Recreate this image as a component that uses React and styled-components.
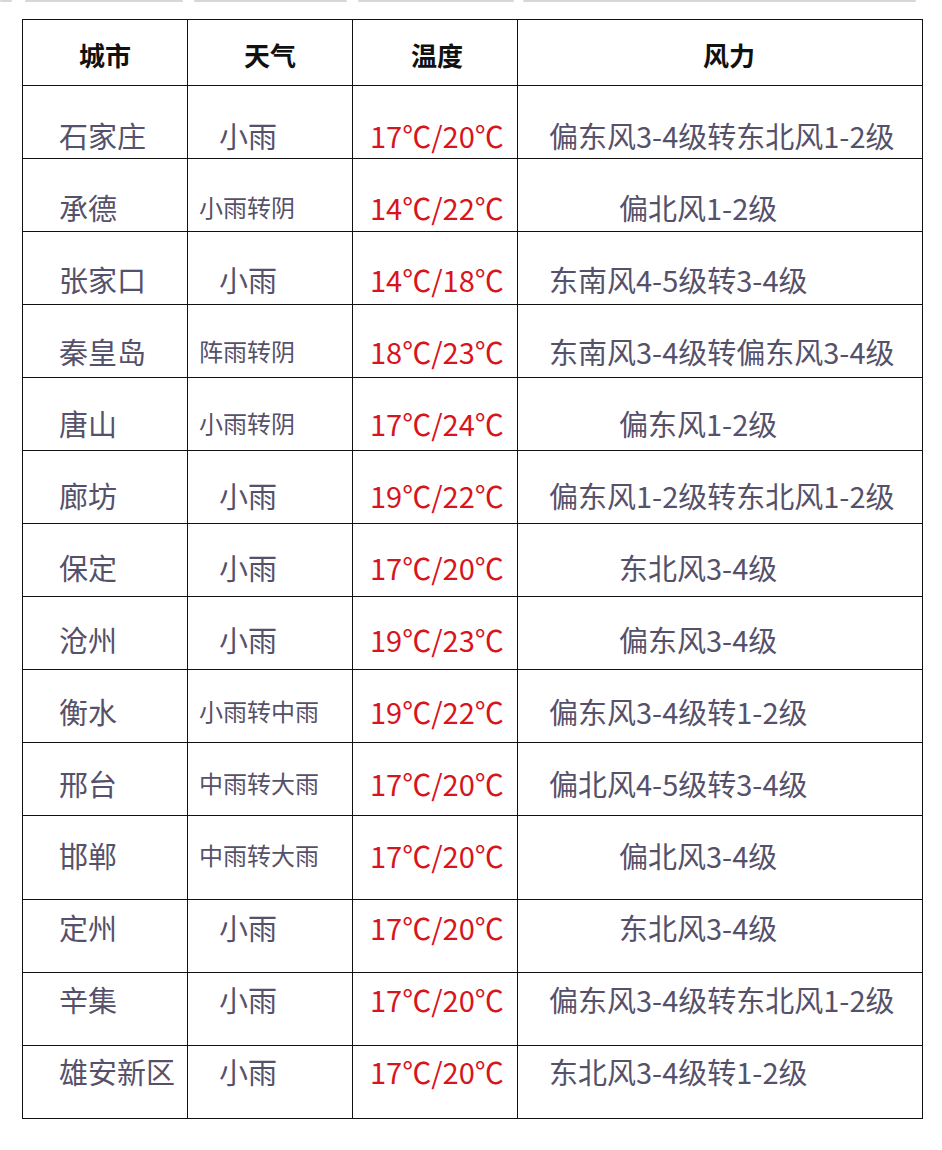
import React from "react";
import styled, { createGlobalStyle } from "styled-components";

const Global = createGlobalStyle`
  html, body { margin: 0; padding: 0; background: #ffffff; }
  body { font-family: "Noto Sans CJK SC", "Noto Sans", sans-serif; }
`;

const Page = styled.div`
  width: 942px;
  height: 1150px;
  background: #ffffff;
  overflow: hidden;
`;

const Strip = styled.div`
  display: flex;
  height: 2px;
`;

const StripBar = styled.div`
  width: ${(p) => p.$w}px;
  margin-left: ${(p) => p.$gap}px;
  height: 2px;
  border-radius: 1px;
  background: #d5d7da;
  flex: none;
`;

const Table = styled.table`
  border-collapse: collapse;
  margin: 17px 0 0 22px;
  table-layout: fixed;
  width: 900px;
`;

const Col = styled.col`
  width: ${(p) => p.$w}px;
`;

const HeadCell = styled.th`
  height: 66px;
  padding: 0 0 0 ${(p) => p.$shift || 0}px;
  border: 1px solid #111111;
  text-align: center;
  vertical-align: middle;
  font-family: "Noto Sans CJK SC", sans-serif;
  font-weight: 700;
  font-size: 26px;
  line-height: 30px;
  color: #111111;
  box-sizing: border-box;
  & > span { position: relative; top: 2px; }
`;

const Row = styled.tr`
  height: ${(p) => p.$h}px;
`;

const Cell = styled.td`
  border: 1px solid #111111;
  vertical-align: top;
  padding: ${(p) => p.$top}px 0 0 ${(p) => p.$pad}px;
  font-family: "Noto Sans CJK SC", sans-serif;
  font-size: ${(p) => (p.$small ? 24 : 29)}px;
  line-height: 36px;
  color: ${(p) => (p.$red ? "#d8141c" : "#56516a")};
  white-space: nowrap;
  box-sizing: border-box;
`;

const rows = [
  ["石家庄", "小雨", "17℃/20℃", "偏东风3-4级转东北风1-2级", 31],
  ["承德", "小雨转阴", "14℃/22℃", "偏北风1-2级", 101],
  ["张家口", "小雨", "14℃/18℃", "东南风4-5级转3-4级", 31],
  ["秦皇岛", "阵雨转阴", "18℃/23℃", "东南风3-4级转偏东风3-4级", 31],
  ["唐山", "小雨转阴", "17℃/24℃", "偏东风1-2级", 101],
  ["廊坊", "小雨", "19℃/22℃", "偏东风1-2级转东北风1-2级", 31],
  ["保定", "小雨", "17℃/20℃", "东北风3-4级", 101],
  ["沧州", "小雨", "19℃/23℃", "偏东风3-4级", 101],
  ["衡水", "小雨转中雨", "19℃/22℃", "偏东风3-4级转1-2级", 31],
  ["邢台", "中雨转大雨", "17℃/20℃", "偏北风4-5级转3-4级", 31],
  ["邯郸", "中雨转大雨", "17℃/20℃", "偏北风3-4级", 101],
  ["定州", "小雨", "17℃/20℃", "东北风3-4级", 101],
  ["辛集", "小雨", "17℃/20℃", "偏东风3-4级转东北风1-2级", 31],
  ["雄安新区", "小雨", "17℃/20℃", "东北风3-4级转1-2级", 31],
];

const strip = [
  [12, 0],
  [158, 13],
  [153, 11],
  [156, 11],
  [393, 9],
];

export default function App() {
  let top = 85;
  return (
    <Page>
      <Global />
      <Strip>
        {strip.map(([w, g], i) => (
          <StripBar key={i} $w={w} $gap={g} />
        ))}
      </Strip>
      <Table>
        <colgroup>
          <Col $w={165} />
          <Col $w={165} />
          <Col $w={165} />
          <Col $w={405} />
        </colgroup>
        <thead>
          <tr>
            <HeadCell><span>城市</span></HeadCell>
            <HeadCell><span>天气</span></HeadCell>
            <HeadCell $shift={4}><span>温度</span></HeadCell>
            <HeadCell $shift={18}><span>风力</span></HeadCell>
          </tr>
        </thead>
        <tbody>
          {rows.map(([city, weather, temp, wind, windPad], i) => {
            const h = i === 10 ? 84 : 73;
            const center = 136 + 72 * i;
            const offset = center - top - 20;
            top += h;
            const small = weather.length > 2;
            return (
              <Row key={city} $h={h}>
                <Cell $top={offset} $pad={36}>{city}</Cell>
                <Cell $top={offset} $pad={small ? 11 : 31} $small={small}>
                  {weather}
                </Cell>
                <Cell $top={offset} $pad={17} $red>{temp}</Cell>
                <Cell $top={offset} $pad={windPad}>{wind}</Cell>
              </Row>
            );
          })}
        </tbody>
      </Table>
    </Page>
  );
}
